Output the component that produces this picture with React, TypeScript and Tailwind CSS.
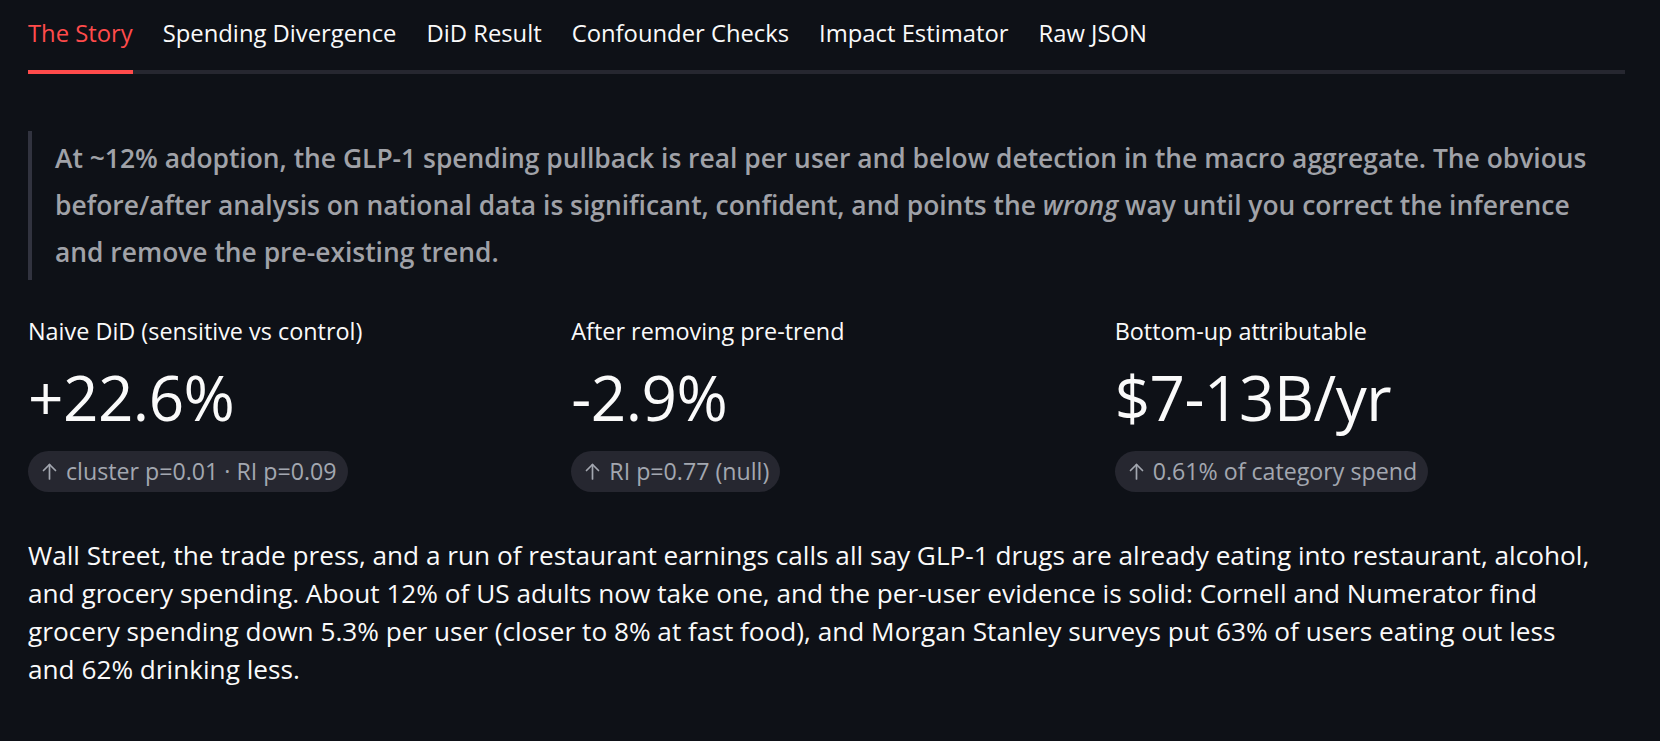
import React from "react";

const font = { fontFamily: '"Open Sans", "Noto Sans", sans-serif' };

function Arrow() {
  return (
    <svg width="17" height="19" viewBox="0 0 17 19" fill="none" stroke="currentColor" strokeWidth="1.7" strokeLinecap="round" strokeLinejoin="round" className="shrink-0">
      <path d="M8.5 17V2.5" />
      <path d="M2.5 8.5L8.5 2.5L14.5 8.5" />
    </svg>
  );
}

function Metric({ label, value, delta }: { label: string; value: string; delta: string }) {
  return (
    <div className="flex flex-col items-start">
      <div className="text-[23.4px] leading-[30px] text-[#fafafa]">{label}</div>
      <div className="mt-[18px] text-[62px] leading-[66px] text-[#fafafa] font-normal tracking-[-0.5px]">{value}</div>
      <div className="mt-[21px] flex items-center gap-[8px] rounded-full bg-[#262730] pl-[13px] pr-[11px] h-[41px] text-[23.2px] text-[#a3a7b0]">
        <Arrow />
        <span>{delta}</span>
      </div>
    </div>
  );
}

export default function App() {
  const tabs = ["The Story", "Spending Divergence", "DiD Result", "Confounder Checks", "Impact Estimator", "Raw JSON"];
  const lines = [
    "Wall Street, the trade press, and a run of restaurant earnings calls all say GLP-1 drugs are already eating into restaurant, alcohol,",
    "and grocery spending. About 12% of US adults now take one, and the per-user evidence is solid: Cornell and Numerator find",
    "grocery spending down 5.3% per user (closer to 8% at fast food), and Morgan Stanley surveys put 63% of users eating out less",
    "and 62% drinking less.",
  ];
  return (
    <div className="min-h-[741px] w-full bg-[#0e1117] text-[#fafafa]" style={font}>
      <div className="px-[28px] pt-[12px]">
        <div className="mr-[7px] flex border-b-[4px] border-[#262730]">
          {tabs.map((t, i) => (
            <div
              key={t}
              className={
                "mb-[-4px] pt-[5px] pb-[21px] text-[23.8px] leading-[32px] border-b-[4px] " +
                (i === 0 ? "text-[#ff4b4b] border-[#ff4b4b]" : "text-[#fafafa] border-transparent") +
                (i < tabs.length - 1 ? " mr-[30px]" : "")
              }
            >
              {t}
            </div>
          ))}
        </div>

        <blockquote className="mt-[57px] border-l-[4px] border-[#31333f] pl-[23px] py-[4px] text-[26.4px] leading-[47px] font-semibold text-[#a0a2a8]">
          <span className="block whitespace-nowrap">
            At ~12% adoption, the GLP-1 spending pullback is real per user and below detection in the macro aggregate. The obvious
          </span>
          <span className="block whitespace-nowrap">
            before/after analysis on national data is significant, confident, and points the <em>wrong</em> way until you correct the inference
          </span>
          <span className="block whitespace-nowrap">and remove the pre-existing trend.</span>
        </blockquote>

        <div className="mt-[36px] grid grid-cols-3 gap-[26px]">
          <Metric label="Naive DiD (sensitive vs control)" value="+22.6%" delta="cluster p=0.01 · RI p=0.09" />
          <Metric label="After removing pre-trend" value="-2.9%" delta="RI p=0.77 (null)" />
          <Metric label="Bottom-up attributable" value="$7-13B/yr" delta="0.61% of category spend" />
        </div>

        <p className="mt-[44px] text-[26.2px] leading-[38px] text-[#fafafa]">
          {lines.map((l) => (
            <span key={l} className="block whitespace-nowrap">{l}</span>
          ))}
        </p>
      </div>
    </div>
  );
}
